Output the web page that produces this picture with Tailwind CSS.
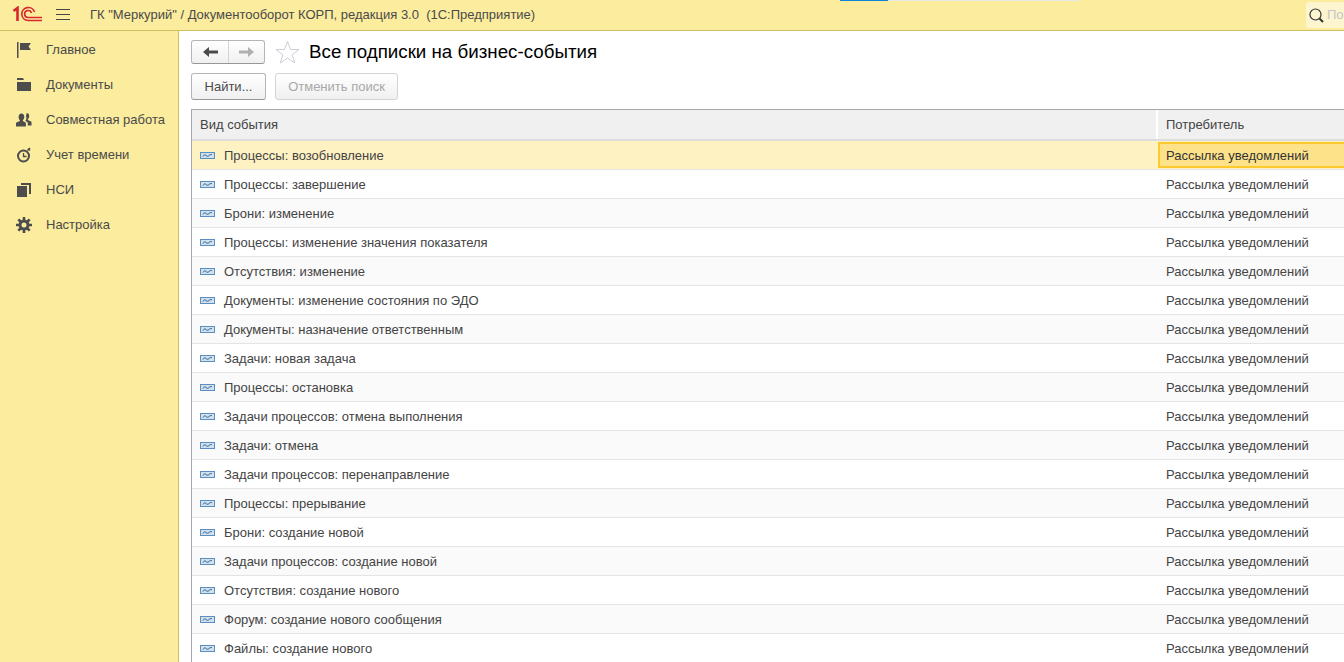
<!DOCTYPE html>
<html lang="ru"><head><meta charset="utf-8"><title>1C</title>
<script src="https://cdn.jsdelivr.net/npm/@tailwindcss/browser@4"></script></head>
<body class="w-[1344px] h-[662px] overflow-hidden bg-white font-['Liberation_Sans',Arial,sans-serif] text-[13px] text-[#444]">
<div class="relative h-[31px] flex items-center bg-[#fbec9e] border-b border-[#cdbf62]">
  <div class="absolute left-[840px] top-0 h-[1px] w-[48px] bg-[#0a84d6]"></div>
  <div class="absolute left-[888px] top-0 h-[1px] w-[191px] bg-[#e6e6e6]"></div>
  <svg class="ml-[13px] w-[29px] h-[16px] mb-[2px]" viewBox="0 0 29 16" fill="none" stroke="#d9272e">
    <path d="M0.500 5 L4.500 2 V15" stroke-width="2.600"/>
    <path d="M29 14.500 H15 A6.500 6.500 0 1 1 21.500 6" stroke-width="1.600"/>
    <path d="M29 11.500 H15 A3.500 3.500 0 1 1 18.500 7" stroke-width="1.600"/>
  </svg>
  <svg class="ml-[14px] w-[14px] h-[12px]" viewBox="0 0 14 12" stroke="#444" stroke-width="1"><path d="M0 .5H14M0 5.500H14M0 10.500H14"/></svg>
  <span class="ml-[20px] text-[#4a4a4a]">ГК "Меркурий" / Документооборот КОРП, редакция 3.0&nbsp; (1С:Предприятие)</span>
  <div class="absolute right-0 top-[2px] w-[38px] h-[26px] bg-[#fdf5cf] rounded-l-[3px] flex items-center pl-[3px]">
    <svg class="w-[15px] h-[15px] shrink-0" viewBox="0 0 15 15" fill="none" stroke="#333"><circle cx="6.500" cy="6.500" r="5.500" stroke-width="1.200"/><path d="M10.500 10.500L14 14" stroke-width="2"/></svg>
    <span class="ml-[3px] text-[#c4c4c4]">По</span>
  </div>
</div>
<div class="flex h-[631px]">
  <nav class="w-[179px] shrink-0 bg-[#fbec9e] border-r border-[#cdbf62] pt-[1px] text-[#4a4a4a]">
    <a class="h-[35px] flex items-center">
      <svg class="ml-[16px] w-[16px] h-[16px] shrink-0" viewBox="0 0 16 16" fill="#4d4d4d"><path d="M1 0h1.500v16H1zM4 1h11l-2.500 3.500L15 8H4z"/></svg>
      <span class="ml-[14px]">Главное</span>
    </a>
    <a class="h-[35px] flex items-center">
      <svg class="ml-[16px] w-[16px] h-[16px] shrink-0" viewBox="0 0 16 16" fill="#4d4d4d"><path d="M1 1h6l1 2H1zM1 5h14v9H1z"/></svg>
      <span class="ml-[14px]">Документы</span>
    </a>
    <a class="h-[35px] flex items-center">
      <svg class="ml-[16px] w-[16px] h-[16px] shrink-0" viewBox="0 0 16 16" fill="#4d4d4d"><path d="M5.500 1.500c1.800 0 2.800 1.300 2.800 3.200 0 1.400-.6 2.600-1.400 3.200v1l3 1.800v3.800H0v-3.800l3.800-1.800v-1C3 7.300 2.600 6.100 2.600 4.700c0-1.900 1.100-3.200 2.900-3.200zM10.500 1c1.700 0 2.700 1.300 2.700 3 0 1.400-.5 2.500-1.300 3.100v1l3.600 1.700v3.700h-3.700v-3l-2.400-1.600c.7-.9 1-2 1-3.200 0-.9-.2-1.600-.6-2.300.2-.3.4-.4.700-.4z"/></svg>
      <span class="ml-[14px]">Совместная работа</span>
    </a>
    <a class="h-[35px] flex items-center">
      <svg class="ml-[16px] w-[16px] h-[16px] shrink-0" viewBox="0 0 16 16" fill="none" stroke="#4d4d4d"><circle cx="7.500" cy="9" r="5.500" stroke-width="2"/><path d="M7.500 6v3.500H10.500" stroke-width="1.300"/><path d="M11.500 3.500L14 1M12 1.500l2 2" stroke-width="1.500"/></svg>
      <span class="ml-[14px]">Учет времени</span>
    </a>
    <a class="h-[35px] flex items-center">
      <svg class="ml-[16px] w-[16px] h-[16px] shrink-0" viewBox="0 0 16 16" fill="#4d4d4d"><path d="M1 4h10v11H1zM5 1h10v11h-2V3H5z"/></svg>
      <span class="ml-[14px]">НСИ</span>
    </a>
    <a class="h-[35px] flex items-center">
      <svg class="ml-[16px] w-[16px] h-[16px] shrink-0" viewBox="0 0 16 16" fill="none" stroke="#4d4d4d"><circle cx="8" cy="8" r="4" stroke-width="3"/><path d="M8 0v3M8 13v3M0 8h3M13 8h3M2.300 2.300l2.200 2.200M11.500 11.500l2.200 2.200M13.700 2.300l-2.200 2.200M4.500 11.500l-2.200 2.200" stroke-width="2.600"/></svg>
      <span class="ml-[14px]">Настройка</span>
    </a>
  </nav>
  <main class="flex-1 min-w-0 pl-[12px]">
    <div class="h-[41px] flex items-center pt-[1px]">
      <div class="flex w-[74px] h-[24px] rounded-[3px] border border-[#b5b5b5] border-b-[#979797] bg-gradient-to-b from-white to-[#f0f0f0]">
        <div class="w-[37px] border-r border-[#d4d4d4] flex items-center justify-center"><svg class="w-[15px] h-[10px]" viewBox="0 0 15 10" fill="#4a4a4a"><path d="M0 5L6 0v3.500h9v3H6V10z"/></svg></div>
        <div class="flex-1 flex items-center justify-center"><svg class="w-[15px] h-[10px]" viewBox="0 0 15 10" fill="#b0b0b0"><path d="M15 5L9 0v3.500H0v3h9V10z"/></svg></div>
      </div>
      <svg class="ml-[10px] w-[25px] h-[24px]" viewBox="0 0 25 24" fill="#fff" stroke="#c9ced6"><path d="M12.500 1.500l3 8h8.500l-6.800 5.200 2.500 8.300-7.200-5-7.200 5 2.500-8.300L1 9.500h8.500z"/></svg>
      <h1 class="ml-[9px] text-[18.75px] text-black">Все подписки на бизнес-события</h1>
    </div>
    <div class="flex gap-[9px] mt-[1px] h-[27px]">
      <button class="w-[75px] h-[27px] rounded-[3px] border border-[#b5b5b5] border-b-[#979797] bg-gradient-to-b from-white to-[#f0f0f0] text-[#4a4a4a]">Найти...</button>
      <button class="w-[123px] h-[27px] rounded-[3px] border border-[#d4d4d4] bg-gradient-to-b from-white to-[#f0f0f0] text-[#a8a8a8]">Отменить поиск</button>
    </div>
    <div class="mt-[9px] border-l border-t border-[#a8a8a8]">
      <div class="flex h-[31px] bg-[#f0f0f0] border-b-2 border-[#dcdcdc]">
        <div class="w-[966px] pl-[8px] flex items-center border-r-2 border-white">Вид события</div>
        <div class="flex-1 pl-[8px] flex items-center">Потребитель</div>
      </div>
      <div class="flex h-[29px] bg-[#fef2c3] border-b border-[#e4e4e4]">
        <div class="w-[966px] pl-[8px] pt-[1px] flex items-center"><svg class="w-[15px] h-[7px]" viewBox="0 0 15 7"><rect x=".5" y=".5" width="14" height="6" fill="#cfe0ef" stroke="#5c8fbf"/><path d="M3 4.500c1-2 2-2 3-1s2 1 3 0 2-1 3-1" fill="none" stroke="#2b5d8f"/></svg><span class="ml-[9px]">Процессы: возобновление</span></div>
        <div class="flex-1 pl-[6px] pt-[1px] flex items-center bg-[#fde28a] border-2 border-r-0 border-[#fdc92f] h-[26px] mt-[1px] text-[#333]">Рассылка уведомлений</div>
      </div>
      <div class="flex h-[29px] bg-white border-b border-[#e4e4e4]">
        <div class="w-[966px] pl-[8px] pt-[1px] flex items-center"><svg class="w-[15px] h-[7px]" viewBox="0 0 15 7"><rect x=".5" y=".5" width="14" height="6" fill="#cfe0ef" stroke="#5c8fbf"/><path d="M3 4.500c1-2 2-2 3-1s2 1 3 0 2-1 3-1" fill="none" stroke="#2b5d8f"/></svg><span class="ml-[9px]">Процессы: завершение</span></div>
        <div class="flex-1 pl-[8px] pt-[1px] flex items-center">Рассылка уведомлений</div>
      </div>
      <div class="flex h-[29px] bg-[#fafafa] border-b border-[#e4e4e4]">
        <div class="w-[966px] pl-[8px] pt-[1px] flex items-center"><svg class="w-[15px] h-[7px]" viewBox="0 0 15 7"><rect x=".5" y=".5" width="14" height="6" fill="#cfe0ef" stroke="#5c8fbf"/><path d="M3 4.500c1-2 2-2 3-1s2 1 3 0 2-1 3-1" fill="none" stroke="#2b5d8f"/></svg><span class="ml-[9px]">Брони: изменение</span></div>
        <div class="flex-1 pl-[8px] pt-[1px] flex items-center">Рассылка уведомлений</div>
      </div>
      <div class="flex h-[29px] bg-white border-b border-[#e4e4e4]">
        <div class="w-[966px] pl-[8px] pt-[1px] flex items-center"><svg class="w-[15px] h-[7px]" viewBox="0 0 15 7"><rect x=".5" y=".5" width="14" height="6" fill="#cfe0ef" stroke="#5c8fbf"/><path d="M3 4.500c1-2 2-2 3-1s2 1 3 0 2-1 3-1" fill="none" stroke="#2b5d8f"/></svg><span class="ml-[9px]">Процессы: изменение значения показателя</span></div>
        <div class="flex-1 pl-[8px] pt-[1px] flex items-center">Рассылка уведомлений</div>
      </div>
      <div class="flex h-[29px] bg-[#fafafa] border-b border-[#e4e4e4]">
        <div class="w-[966px] pl-[8px] pt-[1px] flex items-center"><svg class="w-[15px] h-[7px]" viewBox="0 0 15 7"><rect x=".5" y=".5" width="14" height="6" fill="#cfe0ef" stroke="#5c8fbf"/><path d="M3 4.500c1-2 2-2 3-1s2 1 3 0 2-1 3-1" fill="none" stroke="#2b5d8f"/></svg><span class="ml-[9px]">Отсутствия: изменение</span></div>
        <div class="flex-1 pl-[8px] pt-[1px] flex items-center">Рассылка уведомлений</div>
      </div>
      <div class="flex h-[29px] bg-white border-b border-[#e4e4e4]">
        <div class="w-[966px] pl-[8px] pt-[1px] flex items-center"><svg class="w-[15px] h-[7px]" viewBox="0 0 15 7"><rect x=".5" y=".5" width="14" height="6" fill="#cfe0ef" stroke="#5c8fbf"/><path d="M3 4.500c1-2 2-2 3-1s2 1 3 0 2-1 3-1" fill="none" stroke="#2b5d8f"/></svg><span class="ml-[9px]">Документы: изменение состояния по ЭДО</span></div>
        <div class="flex-1 pl-[8px] pt-[1px] flex items-center">Рассылка уведомлений</div>
      </div>
      <div class="flex h-[29px] bg-[#fafafa] border-b border-[#e4e4e4]">
        <div class="w-[966px] pl-[8px] pt-[1px] flex items-center"><svg class="w-[15px] h-[7px]" viewBox="0 0 15 7"><rect x=".5" y=".5" width="14" height="6" fill="#cfe0ef" stroke="#5c8fbf"/><path d="M3 4.500c1-2 2-2 3-1s2 1 3 0 2-1 3-1" fill="none" stroke="#2b5d8f"/></svg><span class="ml-[9px]">Документы: назначение ответственным</span></div>
        <div class="flex-1 pl-[8px] pt-[1px] flex items-center">Рассылка уведомлений</div>
      </div>
      <div class="flex h-[29px] bg-white border-b border-[#e4e4e4]">
        <div class="w-[966px] pl-[8px] pt-[1px] flex items-center"><svg class="w-[15px] h-[7px]" viewBox="0 0 15 7"><rect x=".5" y=".5" width="14" height="6" fill="#cfe0ef" stroke="#5c8fbf"/><path d="M3 4.500c1-2 2-2 3-1s2 1 3 0 2-1 3-1" fill="none" stroke="#2b5d8f"/></svg><span class="ml-[9px]">Задачи: новая задача</span></div>
        <div class="flex-1 pl-[8px] pt-[1px] flex items-center">Рассылка уведомлений</div>
      </div>
      <div class="flex h-[29px] bg-[#fafafa] border-b border-[#e4e4e4]">
        <div class="w-[966px] pl-[8px] pt-[1px] flex items-center"><svg class="w-[15px] h-[7px]" viewBox="0 0 15 7"><rect x=".5" y=".5" width="14" height="6" fill="#cfe0ef" stroke="#5c8fbf"/><path d="M3 4.500c1-2 2-2 3-1s2 1 3 0 2-1 3-1" fill="none" stroke="#2b5d8f"/></svg><span class="ml-[9px]">Процессы: остановка</span></div>
        <div class="flex-1 pl-[8px] pt-[1px] flex items-center">Рассылка уведомлений</div>
      </div>
      <div class="flex h-[29px] bg-white border-b border-[#e4e4e4]">
        <div class="w-[966px] pl-[8px] pt-[1px] flex items-center"><svg class="w-[15px] h-[7px]" viewBox="0 0 15 7"><rect x=".5" y=".5" width="14" height="6" fill="#cfe0ef" stroke="#5c8fbf"/><path d="M3 4.500c1-2 2-2 3-1s2 1 3 0 2-1 3-1" fill="none" stroke="#2b5d8f"/></svg><span class="ml-[9px]">Задачи процессов: отмена выполнения</span></div>
        <div class="flex-1 pl-[8px] pt-[1px] flex items-center">Рассылка уведомлений</div>
      </div>
      <div class="flex h-[29px] bg-[#fafafa] border-b border-[#e4e4e4]">
        <div class="w-[966px] pl-[8px] pt-[1px] flex items-center"><svg class="w-[15px] h-[7px]" viewBox="0 0 15 7"><rect x=".5" y=".5" width="14" height="6" fill="#cfe0ef" stroke="#5c8fbf"/><path d="M3 4.500c1-2 2-2 3-1s2 1 3 0 2-1 3-1" fill="none" stroke="#2b5d8f"/></svg><span class="ml-[9px]">Задачи: отмена</span></div>
        <div class="flex-1 pl-[8px] pt-[1px] flex items-center">Рассылка уведомлений</div>
      </div>
      <div class="flex h-[29px] bg-white border-b border-[#e4e4e4]">
        <div class="w-[966px] pl-[8px] pt-[1px] flex items-center"><svg class="w-[15px] h-[7px]" viewBox="0 0 15 7"><rect x=".5" y=".5" width="14" height="6" fill="#cfe0ef" stroke="#5c8fbf"/><path d="M3 4.500c1-2 2-2 3-1s2 1 3 0 2-1 3-1" fill="none" stroke="#2b5d8f"/></svg><span class="ml-[9px]">Задачи процессов: перенаправление</span></div>
        <div class="flex-1 pl-[8px] pt-[1px] flex items-center">Рассылка уведомлений</div>
      </div>
      <div class="flex h-[29px] bg-[#fafafa] border-b border-[#e4e4e4]">
        <div class="w-[966px] pl-[8px] pt-[1px] flex items-center"><svg class="w-[15px] h-[7px]" viewBox="0 0 15 7"><rect x=".5" y=".5" width="14" height="6" fill="#cfe0ef" stroke="#5c8fbf"/><path d="M3 4.500c1-2 2-2 3-1s2 1 3 0 2-1 3-1" fill="none" stroke="#2b5d8f"/></svg><span class="ml-[9px]">Процессы: прерывание</span></div>
        <div class="flex-1 pl-[8px] pt-[1px] flex items-center">Рассылка уведомлений</div>
      </div>
      <div class="flex h-[29px] bg-white border-b border-[#e4e4e4]">
        <div class="w-[966px] pl-[8px] pt-[1px] flex items-center"><svg class="w-[15px] h-[7px]" viewBox="0 0 15 7"><rect x=".5" y=".5" width="14" height="6" fill="#cfe0ef" stroke="#5c8fbf"/><path d="M3 4.500c1-2 2-2 3-1s2 1 3 0 2-1 3-1" fill="none" stroke="#2b5d8f"/></svg><span class="ml-[9px]">Брони: создание новой</span></div>
        <div class="flex-1 pl-[8px] pt-[1px] flex items-center">Рассылка уведомлений</div>
      </div>
      <div class="flex h-[29px] bg-[#fafafa] border-b border-[#e4e4e4]">
        <div class="w-[966px] pl-[8px] pt-[1px] flex items-center"><svg class="w-[15px] h-[7px]" viewBox="0 0 15 7"><rect x=".5" y=".5" width="14" height="6" fill="#cfe0ef" stroke="#5c8fbf"/><path d="M3 4.500c1-2 2-2 3-1s2 1 3 0 2-1 3-1" fill="none" stroke="#2b5d8f"/></svg><span class="ml-[9px]">Задачи процессов: создание новой</span></div>
        <div class="flex-1 pl-[8px] pt-[1px] flex items-center">Рассылка уведомлений</div>
      </div>
      <div class="flex h-[29px] bg-white border-b border-[#e4e4e4]">
        <div class="w-[966px] pl-[8px] pt-[1px] flex items-center"><svg class="w-[15px] h-[7px]" viewBox="0 0 15 7"><rect x=".5" y=".5" width="14" height="6" fill="#cfe0ef" stroke="#5c8fbf"/><path d="M3 4.500c1-2 2-2 3-1s2 1 3 0 2-1 3-1" fill="none" stroke="#2b5d8f"/></svg><span class="ml-[9px]">Отсутствия: создание нового</span></div>
        <div class="flex-1 pl-[8px] pt-[1px] flex items-center">Рассылка уведомлений</div>
      </div>
      <div class="flex h-[29px] bg-[#fafafa] border-b border-[#e4e4e4]">
        <div class="w-[966px] pl-[8px] pt-[1px] flex items-center"><svg class="w-[15px] h-[7px]" viewBox="0 0 15 7"><rect x=".5" y=".5" width="14" height="6" fill="#cfe0ef" stroke="#5c8fbf"/><path d="M3 4.500c1-2 2-2 3-1s2 1 3 0 2-1 3-1" fill="none" stroke="#2b5d8f"/></svg><span class="ml-[9px]">Форум: создание нового сообщения</span></div>
        <div class="flex-1 pl-[8px] pt-[1px] flex items-center">Рассылка уведомлений</div>
      </div>
      <div class="flex h-[29px] bg-white border-b border-[#e4e4e4]">
        <div class="w-[966px] pl-[8px] pt-[1px] flex items-center"><svg class="w-[15px] h-[7px]" viewBox="0 0 15 7"><rect x=".5" y=".5" width="14" height="6" fill="#cfe0ef" stroke="#5c8fbf"/><path d="M3 4.500c1-2 2-2 3-1s2 1 3 0 2-1 3-1" fill="none" stroke="#2b5d8f"/></svg><span class="ml-[9px]">Файлы: создание нового</span></div>
        <div class="flex-1 pl-[8px] pt-[1px] flex items-center">Рассылка уведомлений</div>
      </div>
    </div>
  </main>
</div>
</body></html>
